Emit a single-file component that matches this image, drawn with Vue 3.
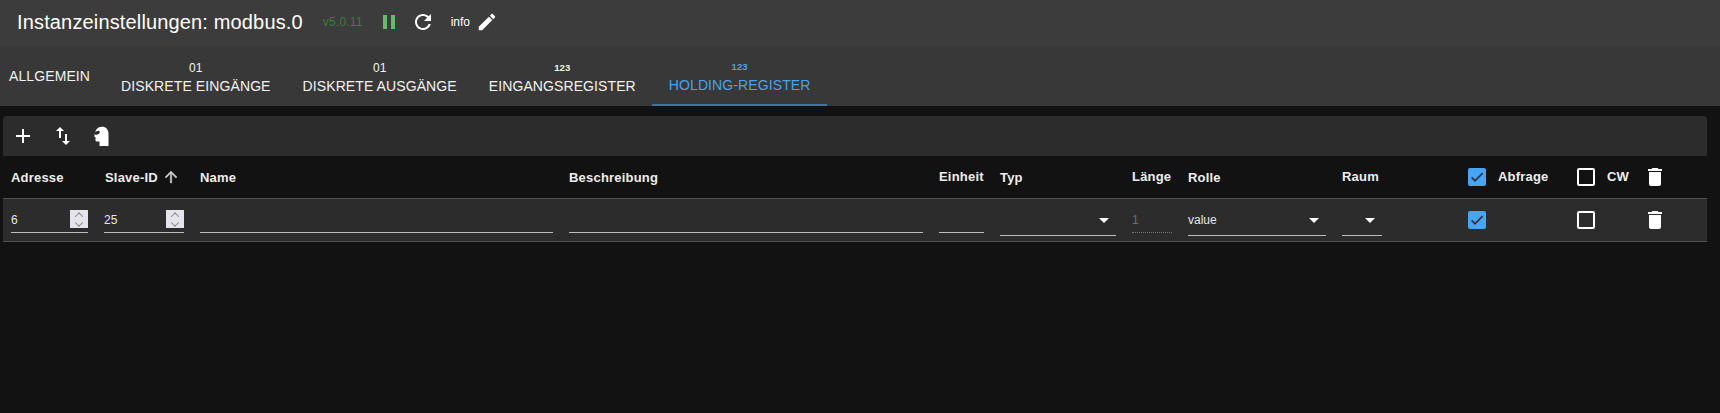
<template>
  <div class="page">
    <header class="head">
      <div class="title-row">
        <h1 class="title">Instanzeinstellungen: modbus.0</h1>
        <span class="version">v5.0.11</span>
        <svg class="icon pause" viewBox="0 0 24 24"><path d="M6 19h4V5H6v14zm8-14v14h4V5h-4z" /></svg>
        <svg class="icon reload" viewBox="0 0 24 24"><path d="M17.65 6.35C16.2 4.9 14.21 4 12 4c-4.42 0-7.99 3.58-7.99 8s3.57 8 7.99 8c3.73 0 6.84-2.55 7.73-6h-2.08c-.82 2.33-3.04 4-5.65 4-3.31 0-6-2.69-6-6s2.69-6 6-6c1.66 0 3.14.69 4.22 1.78L13 11h7V4l-2.35 2.35z" /></svg>
        <span class="info">info</span>
        <svg class="icon edit" viewBox="0 0 24 24"><path d="M3 17.25V21h3.75L17.81 9.94l-3.75-3.75L3 17.25zM20.71 7.04c.39-.39.39-1.02 0-1.41l-2.34-2.34c-.39-.39-1.02-.39-1.41 0l-1.83 1.83 3.75 3.75 1.83-1.83z" /></svg>
      </div>
      <nav class="tabs">
        <div v-for="tab in tabs" :key="tab.label" class="tab" :class="{ active: tab.active }">
          <span v-if="tab.mark" class="mark" :class="{ bold: tab.mark === '123' }">{{ tab.mark }}</span>
          <span>{{ tab.label }}</span>
        </div>
      </nav>
    </header>

    <main class="content">
      <div class="toolbar">
        <svg class="tool" viewBox="0 0 24 24"><path d="M19 13h-6v6h-2v-6H5v-2h6V5h2v6h6v2z" /></svg>
        <svg class="tool" viewBox="0 0 24 24"><path d="M9 3 5 6.99h3V14h2V6.99h3L9 3zm7 14.01V10h-2v7.01h-3L15 21l4-3.99h-3z" /></svg>
        <svg class="tool head-icon" viewBox="0 0 24 24"><path d="M13 2.8c4 0 6.5 2.7 6.5 7.2v12h-9v-4.5H8c-1 0-1.5-.5-1.5-1.5v-3h-1v-2.5C6.5 5.5 9 2.8 13 2.8z" /><ellipse cx="8" cy="8.8" rx="3" ry="1.7" transform="rotate(-20 8 8.8)" fill="#2c2c2c" /></svg>
      </div>

      <div class="grid grid-head">
        <span>Adresse</span>
        <span class="sorted">Slave-ID
          <svg class="arrow" viewBox="0 0 24 24"><path d="m4 12 1.41 1.41L11 7.83V20h2V7.83l5.58 5.59L20 12l-8-8-8 8z" /></svg>
        </span>
        <span>Name</span>
        <span>Beschreibung</span>
        <span class="up">Einheit</span>
        <span>Typ</span>
        <span class="up">Länge</span>
        <span>Rolle</span>
        <span class="up">Raum</span>
        <span class="check-cell">
          <span class="box checked"><svg viewBox="0 0 24 24"><path d="M9 16.17 4.83 12l-1.42 1.41L9 19 21 7l-1.41-1.41z" /></svg></span>
          <span class="up">Abfrage</span>
        </span>
        <span class="check-cell">
          <span class="box"></span>
          <span class="up">CW</span>
        </span>
        <svg class="trash" viewBox="0 0 24 24"><path d="M6 19c0 1.1.9 2 2 2h8c1.1 0 2-.9 2-2V7H6v12zM19 4h-3.5l-1-1h-5l-1 1H5v2h14V4z" /></svg>
      </div>

      <div class="grid grid-row">
        <div class="field"><span>6</span><span class="stepper"><i></i><i class="down"></i></span></div>
        <div class="field"><span>25</span><span class="stepper"><i></i><i class="down"></i></span></div>
        <div class="field"></div>
        <div class="field"></div>
        <div class="field"></div>
        <div class="field select"><b class="caret"></b></div>
        <div class="field disabled">1</div>
        <div class="field select">value<b class="caret"></b></div>
        <div class="field select room"><b class="caret"></b></div>
        <div class="check-cell row-check"><span class="box checked"><svg viewBox="0 0 24 24"><path d="M9 16.17 4.83 12l-1.42 1.41L9 19 21 7l-1.41-1.41z" /></svg></span></div>
        <div class="check-cell row-check"><span class="box"></span></div>
        <svg class="trash row-check" viewBox="0 0 24 24"><path d="M6 19c0 1.1.9 2 2 2h8c1.1 0 2-.9 2-2V7H6v12zM19 4h-3.5l-1-1h-5l-1 1H5v2h14V4z" /></svg>
      </div>
    </main>
  </div>
</template>

<script setup>
const tabs = [
  { label: 'ALLGEMEIN' },
  { label: 'DISKRETE EINGÄNGE', mark: '01' },
  { label: 'DISKRETE AUSGÄNGE', mark: '01' },
  { label: 'EINGANGSREGISTER', mark: '123' },
  { label: 'HOLDING-REGISTER', mark: '123', active: true }
]
</script>

<style>
html, body {
  margin: 0;
  background: #121212;
}
</style>

<style scoped>
.page {
  height: 413px;
  overflow: hidden;
  background: #121212;
  color: #fff;
  font-family: "Liberation Sans", Arial, sans-serif;
}
.head {
  height: 106px;
  background: #383838;
}
.title-row {
  display: flex;
  align-items: center;
  box-sizing: border-box;
  height: 46px;
  padding: 0 0 2px 17px;
  background: #3c3c3c;
}
.title {
  margin: 0;
  font-size: 20px;
  font-weight: 400;
  letter-spacing: 0.15px;
}
.version {
  margin-left: 20px;
  font-size: 12px;
  letter-spacing: 0.2px;
  color: #3c7a3f;
}
.icon {
  flex: none;
  width: 24px;
  height: 24px;
  fill: #fff;
}
.pause {
  margin-left: 14px;
  fill: #66bb6a;
}
.reload {
  margin-left: 10px;
}
.info {
  margin-left: 16px;
  font-size: 12px;
}
.edit {
  width: 22px;
  height: 22px;
  margin-left: 6px;
}
.tabs {
  display: flex;
  height: 60px;
}
.tab {
  display: flex;
  flex-direction: column;
  align-items: center;
  justify-content: center;
  padding: 0 16px;
  font-size: 14px;
  line-height: 17px;
  letter-spacing: 0.1px;
  color: #f2f2f2;
}
.tab:first-child {
  padding: 0 15px 0 9px;
}
.tab.active {
  padding: 0 17px;
  color: #4aa3ec;
  border-bottom: 2px solid #3f73a5;
  box-sizing: border-box;
}
.mark {
  margin: 4px 0 3px;
  font-size: 12px;
  line-height: 14px;
}
.mark.bold {
  font-size: 9.5px;
  font-weight: 700;
}
.content {
  margin: 10px 13px 0 3px;
}
.toolbar {
  display: flex;
  align-items: center;
  gap: 16px;
  height: 40px;
  padding-left: 8px;
  background: #2c2c2c;
  border-radius: 4px 4px 0 0;
}
.tool {
  width: 24px;
  height: 24px;
  fill: #fff;
}
.head-icon {
  margin-left: -2px;
}
.grid {
  display: grid;
  grid-template-columns: 93px 96px 369px 370px 61px 132px 56px 154px 126px 109px 66px 24px;
  padding-left: 8px;
}
.grid-head {
  align-items: center;
  height: 42px;
  font-size: 13px;
  font-weight: 700;
  letter-spacing: 0.2px;
  color: #eee;
  border-bottom: 1px solid #515151;
}
.up {
  padding-bottom: 2px;
}
.sorted {
  display: flex;
  align-items: center;
  gap: 4px;
  padding-left: 1px;
}
.arrow {
  width: 18px;
  height: 18px;
  fill: #ccc;
  stroke: #ccc;
  stroke-width: 0.6;
}
.check-cell {
  display: flex;
  align-items: center;
  gap: 12px;
}
.box {
  display: flex;
  flex: none;
  align-items: center;
  justify-content: center;
  box-sizing: border-box;
  width: 18px;
  height: 18px;
  border: 2px solid #fff;
  border-radius: 2px;
}
.box.checked {
  background: #46a5f5;
  border-color: #46a5f5;
}
.box svg {
  flex: none;
  width: 16px;
  height: 16px;
  fill: #2c2c2c;
  stroke: #2c2c2c;
  stroke-width: 0.5;
}
.trash {
  width: 24px;
  height: 24px;
  fill: #fff;
}
.grid-row {
  align-items: start;
  height: 42px;
  background: #2c2c2c;
  border-bottom: 1px solid #515151;
  font-size: 12px;
}
.field {
  position: relative;
  box-sizing: border-box;
  height: 28px;
  margin: 6px 16px 0 0;
  padding-top: 7px;
  line-height: 17px;
  color: #e6e6e6;
  border-bottom: 1px solid #bdbdbd;
}
.select {
  height: 31px;
}
.room {
  width: 40px;
}
.disabled {
  color: #6e6e6e;
  border-bottom: 1px dotted #777;
}
.row-check {
  margin-top: 9px;
}
.check-cell.row-check {
  margin-top: 12px;
}
.stepper {
  position: absolute;
  top: 5px;
  right: 0;
  display: flex;
  flex-direction: column;
  align-items: center;
  justify-content: center;
  gap: 3px;
  width: 18px;
  height: 18px;
  background: #e4e4ea;
}
.stepper i {
  width: 5px;
  height: 5px;
  border-left: 1px solid #888;
  border-top: 1px solid #888;
  transform: rotate(45deg) translate(1px, 1px);
}
.stepper i.down {
  transform: rotate(225deg) translate(1px, 1px);
}
.caret {
  position: absolute;
  top: 13px;
  right: 7px;
  width: 0;
  height: 0;
  border-left: 5px solid transparent;
  border-right: 5px solid transparent;
  border-top: 5px solid #fff;
}
</style>
